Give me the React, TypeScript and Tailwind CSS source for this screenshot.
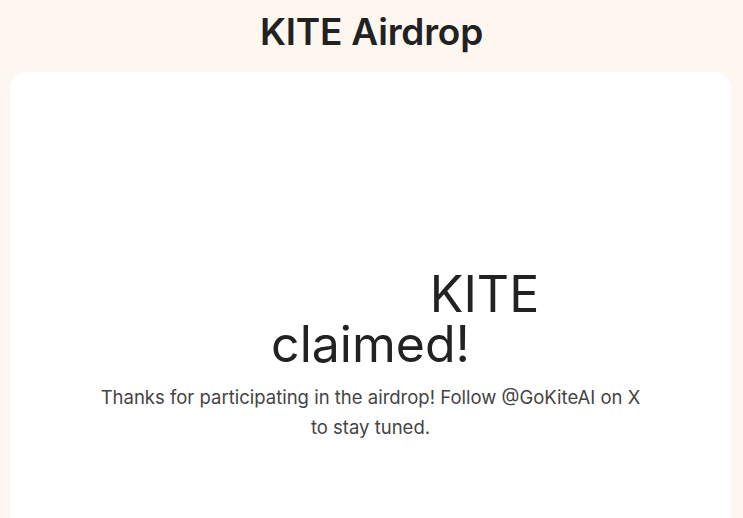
export default function App() {
  return (
    <div className="h-[518px] overflow-hidden bg-[#fef7f0] font-['Inter',sans-serif] flex flex-col">
      <div className="h-[72px] shrink-0 pt-[10px]">
        <h1 className="text-center text-[37px] leading-[44px] font-semibold text-[#222222] tracking-[-0.2px]">
          KITE Airdrop
        </h1>
      </div>
      <div className="ml-[10px] mr-[12px] bg-white rounded-[16px] h-[600px] shrink-0 flex flex-col items-center pt-[197px]">
        <div className="text-[50px] leading-[50px] text-[#222222] text-center">
          <div>
            <span className="inline-block w-[214px]"></span> KITE
          </div>
          <div>claimed!</div>
        </div>
        <p className="mt-[13px] text-[18.5px] leading-[30px] text-[#444444] text-center max-w-[556px]">
          Thanks for participating in the airdrop! Follow @GoKiteAI on X to stay tuned.
        </p>
      </div>
    </div>
  );
}
